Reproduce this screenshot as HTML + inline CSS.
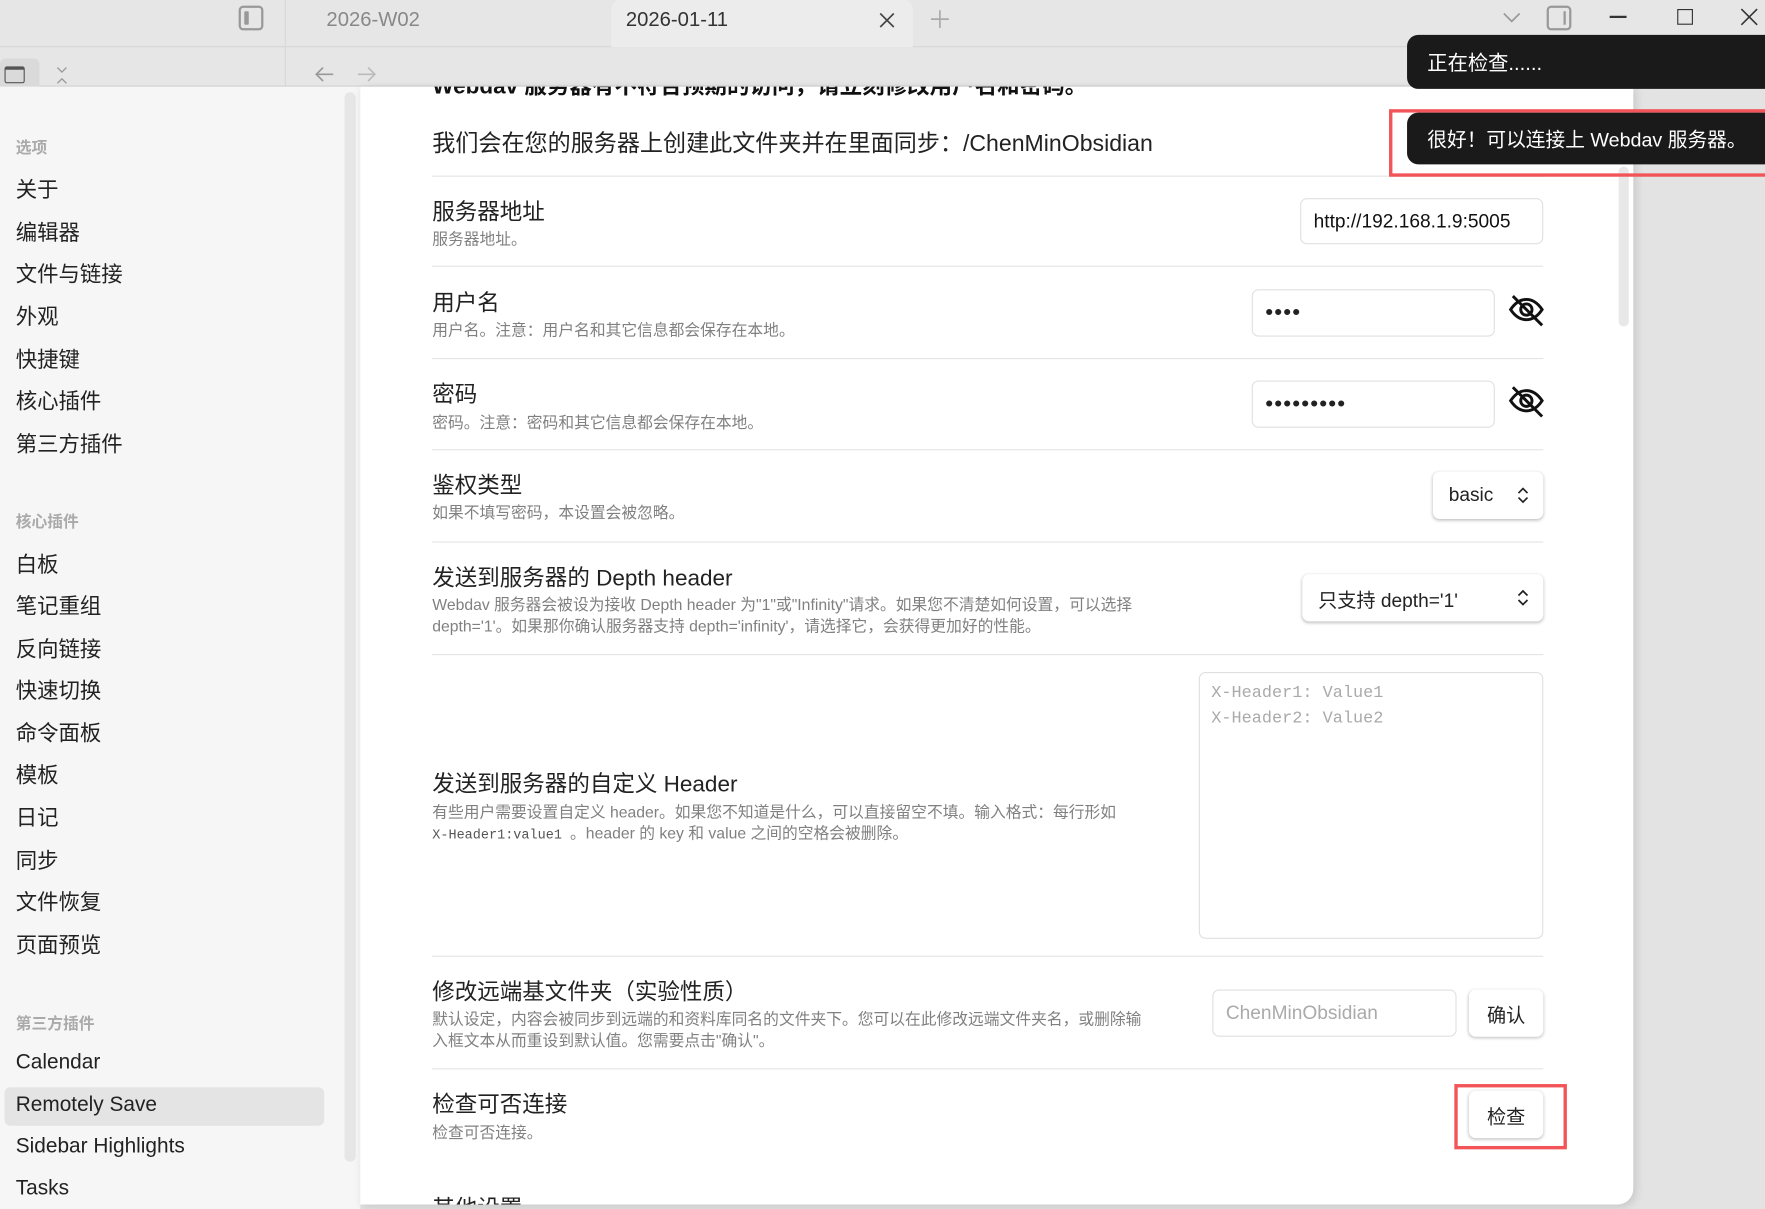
<!DOCTYPE html>
<html><head><meta charset="utf-8"><style>
*{box-sizing:border-box;margin:0;padding:0}
html,body{width:1765px;height:1209px;overflow:hidden;background:#e3e3e3}
#w{position:absolute;left:0;top:0;width:1568px;height:1074px;transform:scale(1.12564,1.1257);transform-origin:0 0;font-family:"Liberation Sans","Noto Sans CJK SC",sans-serif;color:#222}
.a{position:absolute;white-space:nowrap}
.side{position:absolute;left:0;top:77px;width:320px;height:997px;background:#f6f6f6}
.si{position:absolute;left:14px;font-size:19px;color:#222}
.sh{position:absolute;left:14px;font-size:14px;color:#aaa;font-weight:bold}
.t{position:absolute;left:384px;font-size:20px;color:#222}
.d{position:absolute;left:384px;font-size:14px;color:#808080;line-height:19px}
.sep{position:absolute;left:384px;width:987px;height:1px;background:#e4e4e4}
.inp{position:absolute;border:1px solid #e0e0e0;border-radius:6px;background:#fff;font-size:17px;padding-left:11px;display:flex;align-items:center}
.btn{position:absolute;border-radius:6px;background:#fff;box-shadow:0 1px 3px rgba(0,0,0,.25);font-size:17px;display:flex;align-items:center;justify-content:center}
.toast{position:absolute;left:1250px;width:330px;background:#1a1a1a;color:#fff;border-radius:10px;font-size:18px;padding-left:18px;display:flex;align-items:center}
</style></head><body><div id="w">
<div class="a" style="left:0;top:0;width:1568px;height:77px;background:#e6e6e6"></div>
<div class="a" style="left:0;top:41px;width:1568px;height:1px;background:#d6d6d6"></div>
<div class="a" style="left:253px;top:0;width:1px;height:77px;background:#d8d8d8"></div>
<div class="a" style="left:543px;top:0;width:268px;height:42px;background:#ececec;border-radius:8px 8px 0 0"></div>
<div class="a" style="left:0;top:76px;width:1568px;height:1px;background:#cfcfcf"></div>
<div class="a" style="left:212px;top:5px;width:22px;height:22px;border:2px solid #999;border-radius:4px"><div style="position:absolute;left:3px;top:3px;width:4px;height:12px;background:#999;border-radius:1px"></div></div>
<div class="a" style="left:290px;top:7px;font-size:18px;color:#888">2026-W02</div>
<div class="a" style="left:556px;top:7px;font-size:18px;color:#333">2026-01-11</div>
<svg class="a" style="left:781px;top:11px" width="14" height="14"><path d="M1 1l12 12M13 1L1 13" stroke="#444" stroke-width="1.5"/></svg>
<svg class="a" style="left:827px;top:9px" width="16" height="16"><path d="M8 0v16M0 8h16" stroke="#aaa" stroke-width="1.5"/></svg>
<svg class="a" style="left:1334px;top:8px" width="18" height="14"><path d="M2 4l7 7 7-7" fill="none" stroke="#999" stroke-width="1.5"/></svg>
<div class="a" style="left:1374px;top:5px;width:22px;height:22px;border:2px solid #999;border-radius:4px"><div style="position:absolute;right:3px;top:3px;width:2px;height:12px;background:#999"></div></div>
<div class="a" style="left:1430px;top:14px;width:15px;height:1.5px;background:#333"></div>
<div class="a" style="left:1490px;top:8px;width:14px;height:14px;border:1.5px solid #333"></div>
<svg class="a" style="left:1546px;top:7px" width="16" height="16"><path d="M1 1l14 14M15 1L1 15" stroke="#333" stroke-width="1.4"/></svg>
<div class="a" style="left:0;top:52px;width:35px;height:25px;background:#dadada;border-radius:5px 5px 0 0"></div>
<div class="a" style="left:4px;top:59px;width:18px;height:15px;border:1.5px solid #555;border-top-width:3px;border-radius:2px"></div>
<svg class="a" style="left:49px;top:58px" width="12" height="18"><path d="M2 2l4 4 4-4M2 16l4-4 4 4" fill="none" stroke="#999" stroke-width="1.2"/></svg>
<svg class="a" style="left:279px;top:58px" width="18" height="16"><path d="M17 8H2M8 2L2 8l6 6" fill="none" stroke="#999" stroke-width="1.5"/></svg>
<svg class="a" style="left:317px;top:58px" width="18" height="16"><path d="M1 8h15M10 2l6 6-6 6" fill="none" stroke="#bbb" stroke-width="1.5"/></svg>

<div class="side"></div>
<div class="a" style="left:306px;top:82px;width:10px;height:950px;background:#e6e6e6;border-radius:5px"></div>
<div class="a" style="left:4px;top:966px;width:284px;height:34px;background:#e4e4e4;border-radius:5px"></div>
<div class="sh" style="top:121px">选项</div>
<div class="si" style="top:154px">关于</div>
<div class="si" style="top:192px">编辑器</div>
<div class="si" style="top:229px">文件与链接</div>
<div class="si" style="top:267px">外观</div>
<div class="si" style="top:305px">快捷键</div>
<div class="si" style="top:342px">核心插件</div>
<div class="si" style="top:380px">第三方插件</div>
<div class="sh" style="top:453px">核心插件</div>
<div class="si" style="top:487px">白板</div>
<div class="si" style="top:524px">笔记重组</div>
<div class="si" style="top:562px">反向链接</div>
<div class="si" style="top:599px">快速切换</div>
<div class="si" style="top:637px">命令面板</div>
<div class="si" style="top:674px">模板</div>
<div class="si" style="top:712px">日记</div>
<div class="si" style="top:750px">同步</div>
<div class="si" style="top:787px">文件恢复</div>
<div class="si" style="top:825px">页面预览</div>
<div class="sh" style="top:899px">第三方插件</div>
<div class="si" style="top:932px;font-size:18.5px">Calendar</div>
<div class="si" style="top:970px;font-size:18.5px">Remotely Save</div>
<div class="si" style="top:1007px;font-size:18.5px">Sidebar Highlights</div>
<div class="si" style="top:1044px;font-size:18.5px">Tasks</div>

<div class="a" style="left:320px;top:77px;width:1131px;height:993px;background:#fff;border-radius:0 0 14px 0;box-shadow:2px 2px 8px rgba(0,0,0,.12);overflow:hidden">
<div class="a" style="left:64px;top:-17px;font-size:20px;font-weight:bold;color:#111">Webdav 服务器有不符合预期的访问，请立刻修改用户名和密码。</div>
<div class="a" style="left:64px;top:980px;font-size:20px;color:#222">其他设置</div>
</div>
<div class="a" style="left:1438px;top:148px;width:9px;height:142px;background:#e8e8e8;border-radius:5px"></div>
<div class="t" style="top:110px;font-size:20.5px">我们会在您的服务器上创建此文件夹并在里面同步：/ChenMinObsidian</div>
<div class="sep" style="top:156px"></div>
<div class="t" style="top:172px">服务器地址</div><div class="d" style="top:203px">服务器地址。</div>
<div class="inp" style="left:1155px;top:176px;width:216px;height:41px;color:#111">http://192.168.1.9:5005</div>
<div class="sep" style="top:236px"></div>
<div class="t" style="top:253px">用户名</div><div class="d" style="top:284px">用户名。注意：用户名和其它信息都会保存在本地。</div>
<div class="inp" style="left:1112px;top:257px;width:216px;height:42px;font-size:20px;letter-spacing:1px">••••</div>
<svg class="a" style="left:1339px;top:260px" width="34" height="32" viewBox="0 0 34 32"><path d="M3 15c4-6 9-9 14-9s10 3 14 9c-4 6-9 9-14 9S7 21 3 15z" fill="none" stroke="#111" stroke-width="2.6"/><circle cx="17" cy="15" r="5" fill="none" stroke="#111" stroke-width="2.6"/><path d="M5 3l26 26" stroke="#111" stroke-width="2.6"/></svg>
<div class="sep" style="top:318px"></div>
<div class="t" style="top:334px">密码</div><div class="d" style="top:366px">密码。注意：密码和其它信息都会保存在本地。</div>
<div class="inp" style="left:1112px;top:338px;width:216px;height:42px;font-size:20px;letter-spacing:1px">•••••••••</div>
<svg class="a" style="left:1339px;top:341px" width="34" height="32" viewBox="0 0 34 32"><path d="M3 15c4-6 9-9 14-9s10 3 14 9c-4 6-9 9-14 9S7 21 3 15z" fill="none" stroke="#111" stroke-width="2.6"/><circle cx="17" cy="15" r="5" fill="none" stroke="#111" stroke-width="2.6"/><path d="M5 3l26 26" stroke="#111" stroke-width="2.6"/></svg>
<div class="sep" style="top:399px"></div>
<div class="t" style="top:415px">鉴权类型</div><div class="d" style="top:446px">如果不填写密码，本设置会被忽略。</div>
<div class="btn" style="left:1273px;top:419px;width:98px;height:42px;justify-content:flex-start;padding-left:14px">basic</div>
<svg class="a" style="left:1347px;top:432px" width="12" height="16"><path d="M2 6l4-4 4 4M2 10l4 4 4-4" fill="none" stroke="#222" stroke-width="1.5"/></svg>
<div class="sep" style="top:481px"></div>
<div class="t" style="top:497px">发送到服务器的 Depth header</div>
<div class="d" style="top:528px">Webdav 服务器会被设为接收 Depth header 为"1"或"Infinity"请求。如果您不清楚如何设置，可以选择<br>depth='1'。如果那你确认服务器支持 depth='infinity'，请选择它，会获得更加好的性能。</div>
<div class="btn" style="left:1157px;top:510px;width:214px;height:42px;justify-content:flex-start;padding-left:14px">只支持 depth='1'</div>
<svg class="a" style="left:1347px;top:523px" width="12" height="16"><path d="M2 6l4-4 4 4M2 10l4 4 4-4" fill="none" stroke="#222" stroke-width="1.5"/></svg>
<div class="sep" style="top:581px"></div>
<div class="a" style="left:1065px;top:597px;width:306px;height:237px;border:1px solid #e0e0e0;border-radius:6px;padding:6px 10px;font-family:'Liberation Mono',monospace;font-size:15px;color:#aaa;line-height:23px">X-Header1: Value1<br>X-Header2: Value2</div>
<div class="t" style="top:680px">发送到服务器的自定义 Header</div>
<div class="d" style="top:712px">有些用户需要设置自定义 header。如果您不知道是什么，可以直接留空不填。输入格式：每行形如<br><span style="font-family:'Liberation Mono',monospace;font-size:12px;color:#555"> X-Header1:value1 </span>。header 的 key 和 value 之间的空格会被删除。</div>
<div class="sep" style="top:849px"></div>
<div class="t" style="top:865px">修改远端基文件夹（实验性质）</div>
<div class="d" style="top:896px">默认设定，内容会被同步到远端的和资料库同名的文件夹下。您可以在此修改远端文件夹名，或删除输<br>入框文本从而重设到默认值。您需要点击"确认"。</div>
<div class="inp" style="left:1077px;top:879px;width:217px;height:42px;color:#aaa">ChenMinObsidian</div>
<div class="btn" style="left:1305px;top:879px;width:66px;height:42px">确认</div>
<div class="sep" style="top:949px"></div>
<div class="t" style="top:965px">检查可否连接</div><div class="d" style="top:997px">检查可否连接。</div>
<div class="btn" style="left:1305px;top:969px;width:66px;height:42px">检查</div>
<div class="a" style="left:1292px;top:963px;width:100px;height:58px;border:3px solid #f25457"></div>

<div class="a" style="left:1500px;top:55px;width:28px;height:22px;border:2px solid #ccc;border-radius:3px"></div>
<div class="toast" style="top:31px;height:48px">正在检查......</div>
<div class="toast" style="top:100px;height:46px;font-size:17.5px">很好！可以连接上 Webdav 服务器。</div>
<div class="a" style="left:1234px;top:97px;width:340px;height:60px;border:3px solid #f25457"></div>
</div></body></html>
